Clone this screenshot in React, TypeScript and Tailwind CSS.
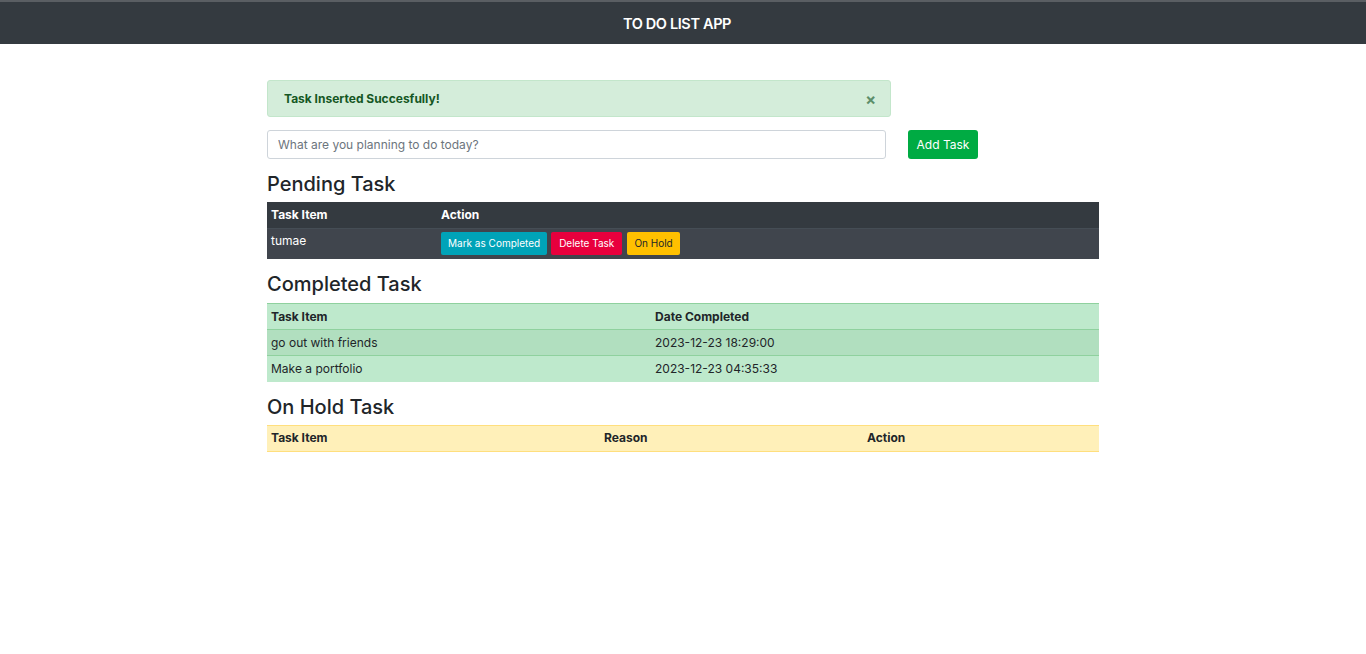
import React from "react";

const font = { fontFamily: "Inter, 'Liberation Sans', sans-serif" };

export default function App() {
  return (
    <div className="min-h-[654px] bg-white text-[#212529]" style={font}>
      {/* Navbar */}
      <div className="h-[44px] bg-[#343a40] border-t-2 border-[#5a5e63] flex items-center justify-center pr-[12px] pt-[1px]">
        <span className="text-white text-[14.5px] font-semibold tracking-tight">TO DO LIST APP</span>
      </div>

      <div className="w-[832px] ml-[267px] pt-[36px]">
        {/* Alert */}
        <div className="w-[624px] h-[37px] bg-[#d4edda] border border-[#c3e6cb] rounded-[3px] flex items-center justify-between pl-[16px] pr-[14px]">
          <span className="text-[#155724] text-[12px] font-bold">Task Inserted Succesfully!</span>
          <span className="text-[#5d8f6a] text-[16px] font-bold leading-none">×</span>
        </div>

        {/* Input row */}
        <div className="flex items-center mt-[13px]">
          <input
            className="w-[619px] h-[29px] border border-[#ced4da] rounded-[3px] px-[10px] text-[12px] placeholder-[#6c757d] outline-none"
            placeholder="What are you planning to do today?"
          />
          <button className="ml-[22px] h-[29px] w-[70px] bg-[#00ab43] text-white text-[12px] rounded-[3px]">
            Add Task
          </button>
        </div>

        {/* Pending */}
        <h2 className="text-[20px] leading-[24px] mt-[13px] mb-[6px] font-medium">Pending Task</h2>
        <table className="w-full text-[12px] text-white border-collapse">
          <thead>
            <tr className="bg-[#343a40] h-[26px] border-b border-[#454d55]">
              <th className="text-left font-bold px-[4px] w-[174px]">Task Item</th>
              <th className="text-left font-bold px-0">Action</th>
            </tr>
          </thead>
          <tbody>
            <tr className="bg-[#40454d] h-[31px]">
              <td className="px-[4px] align-top pt-[3px]">tumae</td>
              <td className="px-0">
                <div className="flex">
                  <button className="h-[23px] px-[7px] bg-[#00a3b8] text-white text-[10px] rounded-[2px]">Mark as Completed</button>
                  <button className="ml-[4px] h-[23px] px-[8px] bg-[#e8003d] text-white text-[10px] rounded-[2px]">Delete Task</button>
                  <button className="ml-[5px] h-[23px] px-[7px] bg-[#ffc000] text-[#212529] text-[10px] rounded-[2px]">On Hold</button>
                </div>
              </td>
            </tr>
          </tbody>
        </table>

        {/* Completed */}
        <h2 className="text-[20px] leading-[24px] mt-[13px] mb-[7px] font-medium">Completed Task</h2>
        <table className="w-full text-[12px] border-collapse">
          <thead>
            <tr className="bg-[#bee9cc] h-[26px] border-t border-b border-[#8fd19e]">
              <th className="text-left font-bold px-[4px] w-[384px]">Task Item</th>
              <th className="text-left font-bold px-[4px]">Date Completed</th>
            </tr>
          </thead>
          <tbody>
            <tr className="bg-[#b1dfbf] h-[26px] border-b border-[#8fd19e]">
              <td className="px-[4px]">go out with friends</td>
              <td className="px-[4px]">2023-12-23 18:29:00</td>
            </tr>
            <tr className="bg-[#bee9cc] h-[26px]">
              <td className="px-[4px]">Make a portfolio</td>
              <td className="px-[4px]">2023-12-23 04:35:33</td>
            </tr>
          </tbody>
        </table>

        {/* On Hold */}
        <h2 className="text-[20px] leading-[24px] mt-[13px] mb-[6px] font-medium">On Hold Task</h2>
        <table className="w-full text-[12px] border-collapse">
          <thead>
            <tr className="bg-[#fff0b9] h-[26px] border-t border-b border-[#ffdf7e]">
              <th className="text-left font-bold px-[4px] w-[333px]">Task Item</th>
              <th className="text-left font-bold px-[4px] w-[263px]">Reason</th>
              <th className="text-left font-bold px-[4px]">Action</th>
            </tr>
          </thead>
        </table>
      </div>
    </div>
  );
}
